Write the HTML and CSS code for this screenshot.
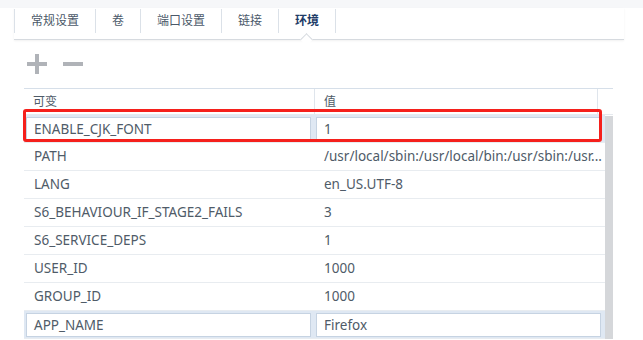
FILE: index.html
```html
<!DOCTYPE html>
<html lang="zh-CN">

<head>
    <meta charset="UTF-8">
    <meta name="viewport" content="width=device-width, initial-scale=1.0">
    <title>环境</title>
    <link rel="stylesheet" href="styles.css">
</head>

<body>
    <div class="topband"></div>

    <div class="tabs">
        <div class="tab">常规设置</div>
        <div class="tab">卷</div>
        <div class="tab">端口设置</div>
        <div class="tab">链接</div>
        <div class="tab active">环境</div>
    </div>

    <div class="toolbar">
        <svg class="tool" width="20" height="20" viewBox="0 0 20 20">
            <rect x="8" y="0" width="4" height="20" />
            <rect x="0" y="8" width="20" height="4" />
        </svg>
        <svg class="tool" width="20" height="20" viewBox="0 0 20 20">
            <rect x="0" y="8" width="20" height="4" />
        </svg>
    </div>

    <div class="grid">
        <div class="head">
            <div class="hcell">可变</div>
            <div class="hcell">值</div>
            <div class="hcell"></div>
        </div>
        <div class="body">
            <div class="rows">
                <div class="row edit">
                    <div class="box">ENABLE_CJK_FONT</div>
                    <div class="box">1</div>
                </div>
                <div class="row">
                    <div class="cell">PATH</div>
                    <div class="cell">/usr/local/sbin:/usr/local/bin:/usr/sbin:/usr...</div>
                </div>
                <div class="row">
                    <div class="cell">LANG</div>
                    <div class="cell">en_US.UTF-8</div>
                </div>
                <div class="row">
                    <div class="cell">S6_BEHAVIOUR_IF_STAGE2_FAILS</div>
                    <div class="cell">3</div>
                </div>
                <div class="row">
                    <div class="cell">S6_SERVICE_DEPS</div>
                    <div class="cell">1</div>
                </div>
                <div class="row">
                    <div class="cell">USER_ID</div>
                    <div class="cell">1000</div>
                </div>
                <div class="row">
                    <div class="cell">GROUP_ID</div>
                    <div class="cell">1000</div>
                </div>
                <div class="row edit">
                    <div class="box">APP_NAME</div>
                    <div class="box">Firefox</div>
                </div>
            </div>
            <div class="scrollbar"></div>
        </div>
        <div class="highlight"></div>
    </div>
</body>

</html>
```

FILE: styles.css
```css
body {
    margin: 0;
    font-family: "Noto Sans", "Noto Sans CJK SC", sans-serif;
    font-size: 12px;
    color: #4f5b68;
    background: #fff;
    overflow: hidden;
}

.topband {
    height: 8px;
    background: #f6f7f9;
}

.tabs {
    display: flex;
    margin-left: 14px;
    width: 610px;
    height: 31px;
    border-bottom: 1px solid #d6dadf;
    box-shadow: 0 1px 2px rgba(0, 0, 0, .06);
}

.tab {
    position: relative;
    margin-top: 1px;
    height: 24px;
    line-height: 24px;
    padding: 0 16px;
    border-left: 1px solid #dbe1e8;
    color: #4b5969;
}

.tab.active {
    border-right: 1px solid #dbe1e8;
    color: #1e3c68;
    font-weight: bold;
}

/* little notch under the active tab */
.tab.active::after {
    content: "";
    position: absolute;
    left: 23px;
    bottom: -11px;
    width: 8px;
    height: 8px;
    background: #fff;
    border-top: 1px solid #d6dadf;
    border-left: 1px solid #d6dadf;
    transform: rotate(45deg);
}

.toolbar {
    display: flex;
    align-items: center;
    gap: 16px;
    height: 48px;
    padding-left: 27px;
}

.tool {
    fill: #b0b3b8;
}

.grid {
    position: relative;
    margin-left: 24px;
    width: 589px;
}

.head {
    display: grid;
    grid-template-columns: 290px 283px 16px;
    height: 25px;
    border-top: 1px solid #d6dfe9;
    border-bottom: 1px solid #e6eaef;
}

.hcell {
    line-height: 25px;
    padding-left: 9px;
}

.hcell + .hcell {
    border-left: 1px solid #dfe5ec;
}

.body {
    display: grid;
    grid-template-columns: 581px 8px;
}

.row {
    display: grid;
    grid-template-columns: 290px 291px;
    height: 27px;
    border-bottom: 1px solid #e8ecf0;
    font-size: 13.5px;
}

.cell {
    line-height: 27px;
    padding: 0 8px 0 10px;
    white-space: nowrap;
    overflow: hidden;
}

.row.edit {
    grid-template-columns: 285px 285px;
    column-gap: 5px;
    padding: 2px 0 0 2px;
    height: 25px;
    background: #dfe8f3;
}

.box {
    height: 22px;
    line-height: 22px;
    padding-left: 7px;
    background: #fff;
    border: 1px solid #c6d3e2;
}

.scrollbar {
    margin-top: 1px;
    background: #d5d7da;
}

/* red annotation frame */
.highlight {
    position: absolute;
    left: -1px;
    top: 21px;
    width: 573px;
    height: 27px;
    border: 3px solid #f5201c;
    border-radius: 3px;
}
```
